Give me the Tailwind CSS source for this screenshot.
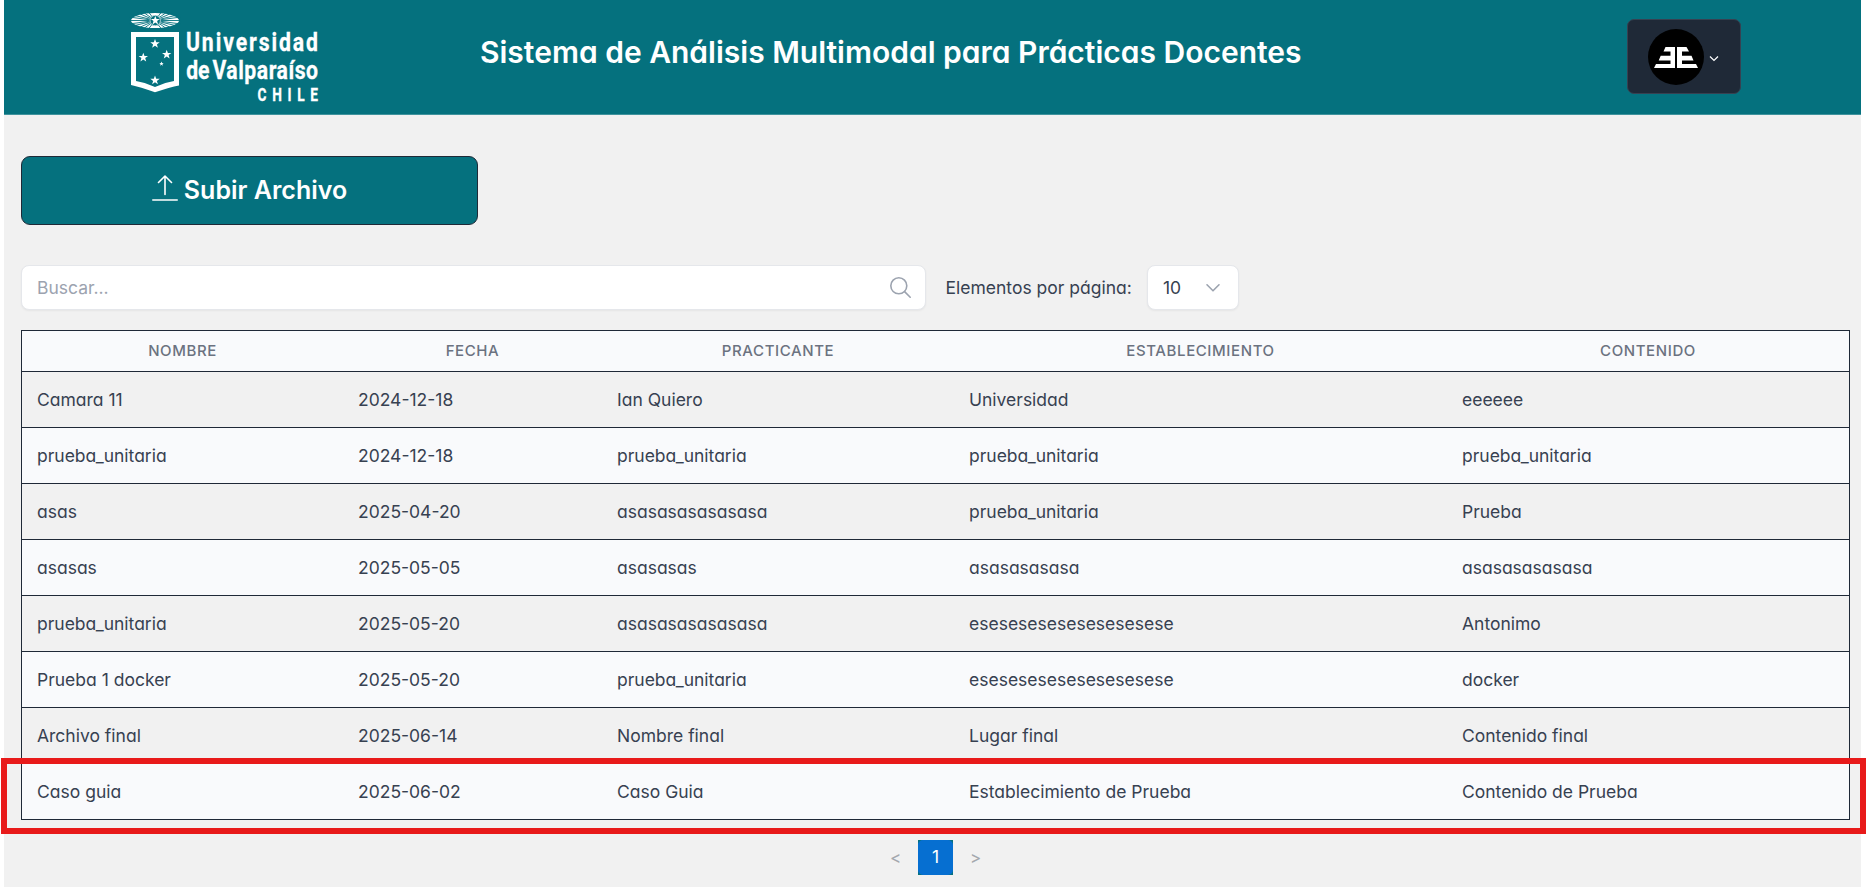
<!DOCTYPE html>
<html lang="es">
<head>
<meta charset="utf-8">
<title>Sistema de Análisis Multimodal</title>
<script src="https://cdn.jsdelivr.net/npm/@tailwindcss/browser@4"></script>
</head>
<body class="h-[887px] overflow-hidden bg-white text-[#374151] font-['Inter','Liberation_Sans',sans-serif]">
<div class="relative h-full pl-1 pr-[5px]">
<div class="h-full bg-[#f1f1f1]">
  <header class="flex h-[115px] border-b border-[#3f939d] bg-[#05717e]">
    <svg class="ml-[121px] mt-2.5 h-[95px] w-[200px]" viewBox="125 10 200 95" fill="#fff">
      <ellipse cx="155" cy="20.500" rx="24" ry="7.500"/>
      <path stroke="#05717e" stroke-width=".9" fill="none" d="M155 20.500L129 17M155 20.500L131 14.500M155 20.500L137 12.500M155 20.500L143 12M155 20.500L148.500 12M155 20.500L129 20.500M155 20.500L129 24M155 20.500L131 26.500M155 20.500L137 28.500M155 20.500L143 29M155 20.500L148.500 29M155 20.500L181 17M155 20.500L179 14.500M155 20.500L173 12.500M155 20.500L167 12M155 20.500L161.500 12M155 20.500L181 20.500M155 20.500L181 24M155 20.500L179 26.500M155 20.500L173 28.500M155 20.500L167 29M155 20.500L161.500 29"/>
      <circle cx="155.200" cy="20.500" r="5.600" fill="#05717e"/>
      <circle cx="155.200" cy="20.500" r="5.200" fill="none" stroke="#fff" stroke-width=".7"/>
      <path d="M155.300 16l1.200 3.100h3.200l-2.600 2 1 3.300-2.800-1.900-2.800 1.900 1-3.300-2.600-2h3.200z"/>
      <path fill-rule="evenodd" d="M131 32H179V85.500Q170 87 155 92.300Q140 87 131 85ZM136 37V81Q146 82.500 155 87Q164 82.500 174 81V37Z"/>
      <path id="st" d="M155 39l1.200 3.200h3.500l-2.800 2.200 1 3.400-2.900-2-2.900 2 1-3.400-2.800-2.200h3.500z"/>
      <use href="#st" x="-11.700" y="13.700"/><use href="#st" x="11.700" y="10.700"/><use href="#st" y="36.500"/>
      <path d="M161.500 61.500l.6 1.500h1.600l-1.300 1.100.5 1.700-1.400-1-1.400 1 .5-1.700-1.300-1.100h1.600z"/>
      <g font-family="Roboto,'Liberation Sans',sans-serif" font-weight="700" stroke="#fff" stroke-width=".3">
        <text transform="translate(186 50.700) scale(.8 1)" font-size="26.500" textLength="165" lengthAdjust="spacing">Universidad</text>
        <text transform="translate(186.300 79) scale(.8 1)" font-size="26.500" textLength="29" lengthAdjust="spacing">de</text>
        <text transform="translate(212.500 79) scale(.8 1)" font-size="26.500" textLength="132" lengthAdjust="spacing">Valparaíso</text>
        <text transform="translate(257.500 100.700) scale(.76 1)" font-size="18" textLength="79.500" lengthAdjust="spacing">CHILE</text>
      </g>
    </svg>
    <h1 class="ml-[155px] mt-[34px] w-[822px] whitespace-nowrap text-[30px]/9 font-semibold text-white [font-feature-settings:'cv11']">Sistema de Análisis Multimodal para Prácticas Docentes</h1>
    <button class="ml-[325px] mt-[19px] flex h-[75px] w-[114px] items-center rounded-[7px] border border-[#374151] bg-[#1f2937] pl-5">
      <svg class="size-14" viewBox="0 0 56 56"><circle cx="28" cy="28" r="28"/><path fill="#fff" d="M17.500 18H27V39H6L8 35H22.500V31.500H10.700L12.700 26.700H22.500V22.500H15.500ZM29 18H38.500L41 22.500H34V26.700H43.500L45.500 31.500H34V35H48L50 39H29Z"/></svg>
      <svg class="ml-1 mt-1 h-3 w-3" viewBox="0 0 12 12" fill="none" stroke="#fff" stroke-width="1.200"><path d="M2 3.500l4 4 4-4"/></svg>
    </button>
  </header>
  <main class="pl-[17px] pr-[11px] pt-[41px]">
    <button class="flex h-[69px] w-[457px] items-center justify-center rounded-[9px] border border-[#1f2937] bg-[#05717e] text-[25px] font-semibold text-white">
      <svg class="-mt-1.5 mr-1.5 h-[26px] w-[26px]" viewBox="0 0 26 26" fill="none" stroke="#fff" stroke-width="1.600" stroke-linecap="round" stroke-linejoin="round"><path d="M13 19.500V1M6.500 7.500L13 1l6.500 6.500M.8 25h24.400"/></svg>
      <span>Subir Archivo</span>
    </button>
    <div class="mt-10 flex h-[45px] items-center text-[17.5px]">
      <div class="flex h-[45px] w-[905px] items-center justify-between rounded-lg border border-gray-200 bg-white pl-[15px] pr-[13px] shadow-xs"><span class="pt-0.5 text-[#9ca3af]">Buscar...</span>
        <svg class="size-[23px]" viewBox="0 0 23 23" fill="none" stroke="#9ca3af" stroke-width="1.600" stroke-linecap="round"><circle cx="9.800" cy="9.800" r="8"/><path d="M15.600 15.600l5.600 5.600"/></svg></div>
      <span class="ml-[19.5px] w-[201.5px] whitespace-nowrap pt-0.5 [font-feature-settings:'cv11']">Elementos por página:</span>
      <div class="flex h-[45px] w-[92px] items-center justify-between rounded-lg border border-gray-200 bg-white pl-[15px] pr-[17px] shadow-xs"><span class="pt-0.5">10</span>
        <svg class="h-4 w-4" viewBox="0 0 16 16" fill="none" stroke="#9ca3af" stroke-width="1.600" stroke-linecap="round" stroke-linejoin="round"><path d="M2 4.800l6 6 6-6"/></svg></div>
    </div>
    <div class="mt-5 border border-[#1f2937] text-[17.5px] [font-feature-settings:'cv11']">
      <div class="grid h-10 grid-cols-[321px_259px_352px_493px_1fr] items-center bg-[#f9fafc] text-center text-[15px] font-medium tracking-[0.6px] text-[#6b7280]"><span>NOMBRE</span><span>FECHA</span><span>PRACTICANTE</span><span>ESTABLECIMIENTO</span><span>CONTENIDO</span></div>
      <div class="grid h-14 grid-cols-[321px_259px_352px_493px_1fr] items-center border-t border-[#1f2937] pt-px *:pl-[15px]"><span>Camara 11</span><span>2024-12-18</span><span>Ian Quiero</span><span>Universidad</span><span>eeeeee</span></div>
      <div class="grid h-14 grid-cols-[321px_259px_352px_493px_1fr] items-center border-t border-[#1f2937] bg-[#f9fafc] pt-px *:pl-[15px]"><span>prueba_unitaria</span><span>2024-12-18</span><span>prueba_unitaria</span><span>prueba_unitaria</span><span>prueba_unitaria</span></div>
      <div class="grid h-14 grid-cols-[321px_259px_352px_493px_1fr] items-center border-t border-[#1f2937] pt-px *:pl-[15px]"><span>asas</span><span>2025-04-20</span><span>asasasasasasasa</span><span>prueba_unitaria</span><span>Prueba</span></div>
      <div class="grid h-14 grid-cols-[321px_259px_352px_493px_1fr] items-center border-t border-[#1f2937] bg-[#f9fafc] pt-px *:pl-[15px]"><span>asasas</span><span>2025-05-05</span><span>asasasas</span><span>asasasasasa</span><span>asasasasasasa</span></div>
      <div class="grid h-14 grid-cols-[321px_259px_352px_493px_1fr] items-center border-t border-[#1f2937] pt-px *:pl-[15px]"><span>prueba_unitaria</span><span>2025-05-20</span><span>asasasasasasasa</span><span>esesesesesesesesesese</span><span>Antonimo</span></div>
      <div class="grid h-14 grid-cols-[321px_259px_352px_493px_1fr] items-center border-t border-[#1f2937] bg-[#f9fafc] pt-px *:pl-[15px]"><span>Prueba 1 docker</span><span>2025-05-20</span><span>prueba_unitaria</span><span>esesesesesesesesesese</span><span>docker</span></div>
      <div class="grid h-14 grid-cols-[321px_259px_352px_493px_1fr] items-center border-t border-[#1f2937] pt-px *:pl-[15px]"><span>Archivo final</span><span>2025-06-14</span><span>Nombre final</span><span>Lugar final</span><span>Contenido final</span></div>
      <div class="grid h-14 grid-cols-[321px_259px_352px_493px_1fr] items-center border-t border-[#1f2937] bg-[#f9fafc] pt-px *:pl-[15px]"><span>Caso guia</span><span>2025-06-02</span><span>Caso Guia</span><span>Establecimiento de Prueba</span><span>Contenido de Prueba</span></div>
    </div>
    <nav class="mt-5 flex items-center justify-center text-[17.5px]">
      <span class="w-[45px] pt-0.5 text-center text-[17px] text-[#a3a8ae]">&lt;</span>
      <span class="bg-[#05717e]"><span class="flex size-[35px] items-center justify-center rounded-[5px] bg-[#066fd1] text-white">1</span></span>
      <span class="w-[45px] pt-0.5 text-center text-[17px] text-[#a3a8ae]">&gt;</span>
    </nav>
  </main>
</div>
<div class="absolute left-px top-[757.5px] h-[76.500px] w-[1865px] border-6 border-[#e81a1a]"></div>
</div>
</body>
</html>
